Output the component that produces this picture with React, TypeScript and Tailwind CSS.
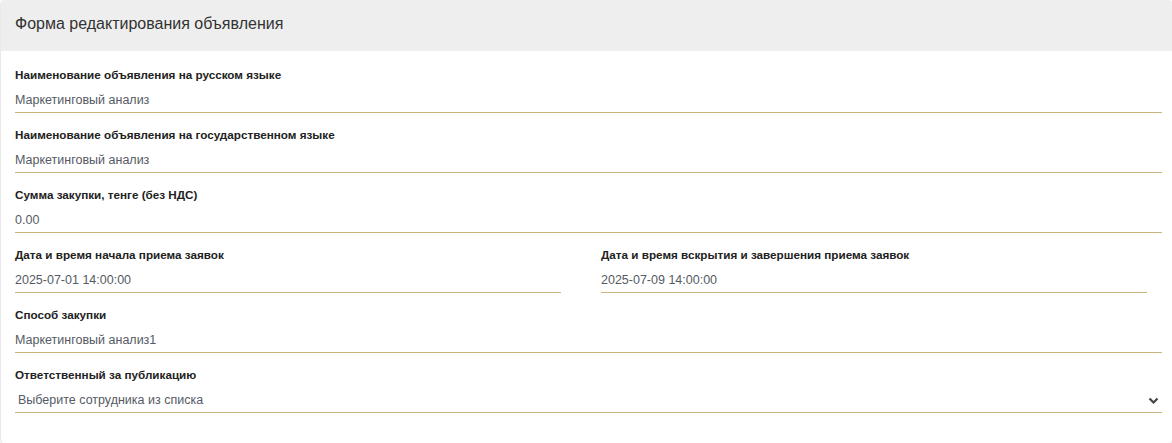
import React from "react";

const valueCls =
  "mt-1 h-[26px] border-b border-[#c9b57b] pt-[2px] text-[12.5px] leading-[23px] text-[#555a64]";
const labelCls = "text-[11.7px] leading-[16px] font-bold text-[#222]";

function Field({ label, value }: { label: string; value: string }) {
  return (
    <div className="mb-[14px]">
      <div className={labelCls}>{label}</div>
      <div className={valueCls}>{value}</div>
    </div>
  );
}

export default function App() {
  return (
    <div className="w-[1172px] h-[443px] bg-white overflow-hidden pl-[1px] font-['Liberation_Sans',Arial,sans-serif]">
      <div className="w-full h-[445px] rounded-md bg-white shadow-[0_0_3px_rgba(0,0,0,0.25)] overflow-hidden">
        <div className="h-[51px] bg-[#eeeeee] px-[14px] flex items-center">
          <span className="text-[16px] text-[#333] pb-[3px]">Форма редактирования объявления</span>
        </div>
        <div className="pt-[16px] pl-[14px] pr-[10px]">
          <Field label="Наименование объявления на русском языке" value="Маркетинговый анализ" />
          <Field label="Наименование объявления на государственном языке" value="Маркетинговый анализ" />
          <Field label="Сумма закупки, тенге (без НДС)" value="0.00" />
          <div className="grid grid-cols-[546px_546px] gap-x-[40px]">
            <Field label="Дата и время начала приема заявок" value="2025-07-01 14:00:00" />
            <Field label="Дата и время вскрытия и завершения приема заявок" value="2025-07-09 14:00:00" />
          </div>
          <Field label="Способ закупки" value="Маркетинговый анализ1" />
          <div className="mb-[14px]">
            <div className={labelCls}>Ответственный за публикацию</div>
            <div className={valueCls + " flex items-center justify-between pl-[3px] pr-[3px]"}>
              <span>Выберите сотрудника из списка</span>
              <svg width="11" height="8" viewBox="0 0 11 8" className="mt-[1px]">
                <polyline points="1.5,1.5 5.5,5.5 9.5,1.5" fill="none" stroke="#444" strokeWidth="2.2" />
              </svg>
            </div>
          </div>
        </div>
      </div>
    </div>
  );
}
